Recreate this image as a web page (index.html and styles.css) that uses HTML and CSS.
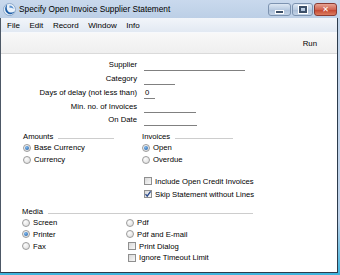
FILE: index.html
```html
<!DOCTYPE html>
<html lang="en">
<head>
  <meta charset="UTF-8">
  <title>Specify Open Invoice Supplier Statement</title>
  <link rel="stylesheet" href="styles.css">
</head>
<body>
  <div class="window">
    <div class="titlebar">
      <svg class="app-icon" width="13" height="13" viewBox="0 0 13 13">
        <circle cx="6.5" cy="6.5" r="6" fill="#e9f1fa" stroke="#7f9dc2" stroke-width="0.8"/>
        <path d="M4.2 1.8 C1.2 3.6 1.4 9.4 5.6 10.9 C8.4 11.8 10.8 10.3 11.6 8.2 C9.6 10 6.4 10 4.8 8 C3.4 6.2 3.6 3.6 4.2 1.8 Z" fill="#1f5fa8"/>
        <path d="M6.4 2.6 C8.6 2.4 10.4 4 10.6 6 C9.4 4.8 7.8 4.4 6.6 4.9 Z" fill="#5d93cf"/>
      </svg>
      <span class="title">Specify Open Invoice Supplier Statement</span>
      <div class="caption-buttons">
        <span class="cap-btn min"><i></i></span>
        <span class="cap-btn max"><i></i></span>
        <span class="cap-btn close">&#x2715;</span>
      </div>
    </div>

    <div class="client">
      <nav class="menubar">
        <span>File</span>
        <span>Edit</span>
        <span>Record</span>
        <span>Window</span>
        <span>Info</span>
      </nav>
      <div class="toolbar">
        <span>Run</span>
      </div>

      <div class="content">
        <div class="fields">
          <label>Supplier</label>
          <span class="field w-supplier"></span>
          <label>Category</label>
          <span class="field w-category"></span>
          <label>Days of delay (not less than)</label>
          <span class="field w-days">0</span>
          <label>Min. no. of Invoices</label>
          <span class="field w-min"></span>
          <label>On Date</label>
          <span class="field w-date"></span>
        </div>

        <div class="groups">
          <div class="group">
            <div class="group-head">Amounts</div>
            <div class="option"><span class="radio checked"></span>Base Currency</div>
            <div class="option"><span class="radio"></span>Currency</div>
          </div>
          <div class="group">
            <div class="group-head">Invoices</div>
            <div class="option"><span class="radio checked"></span>Open</div>
            <div class="option"><span class="radio"></span>Overdue</div>
            <div class="checks">
              <div class="option check-row"><span class="check"></span>Include Open Credit Invoices</div>
              <div class="option check-row"><span class="check checked"><svg width="8" height="8" viewBox="0 0 8 8"><path d="M1.5 4.2 L3.2 6.2 L6.6 1.4" fill="none" stroke="#27478a" stroke-width="1.3"/></svg></span>Skip Statement without Lines</div>
            </div>
          </div>
        </div>

        <div class="media">
          <div class="group-head">Media</div>
          <div class="media-grid">
            <div class="option"><span class="radio"></span>Screen</div>
            <div class="option"><span class="radio"></span>Pdf</div>
            <div class="option"><span class="radio checked"></span>Printer</div>
            <div class="option"><span class="radio"></span>Pdf and E-mail</div>
            <div class="option"><span class="radio"></span>Fax</div>
            <div class="option check-row"><span class="check"></span>Print Dialog</div>
            <div></div>
            <div class="option check-row"><span class="check"></span>Ignore Timeout Limit</div>
          </div>
        </div>
      </div>
    </div>
  </div>
</body>
</html>
```

FILE: styles.css
```css
/* Window frame */
body {
  margin: 0;
  padding: 0;
  font-family: "Liberation Sans", Arial, sans-serif;
  color: #000;
}
.window {
  width: 340px;
  height: 275px;
  box-sizing: border-box;
  padding: 0 2px 2px 0;
  background: linear-gradient(to bottom, #c4d5ea 0, #c0d3ea 80%, #3bb3dc 100%);
  display: flex;
  flex-direction: column;
}
.titlebar {
  height: 18px;
  display: flex;
  align-items: center;
  padding-left: 3px;
  background: linear-gradient(to bottom, #c9d9ed, #bccfe6);
}
.app-icon {
  flex: none;
}
.title {
  margin-left: 3px;
  font-size: 8.3px;
  white-space: nowrap;
}
.caption-buttons {
  margin-left: auto;
  margin-right: 1px;
  align-self: flex-start;
  margin-top: 3px;
  display: flex;
  gap: 1px;
}
.cap-btn {
  height: 13px;
  box-sizing: border-box;
  border: 1px solid #7d93b0;
  border-radius: 3px;
  background: linear-gradient(to bottom, #dde7f3, #b9cbe1 50%, #a9bdd7 51%, #c3d3e6);
  display: flex;
  align-items: center;
  justify-content: center;
}
.cap-btn.min {
  width: 23px;
}
.cap-btn.min i {
  width: 7px;
  height: 2px;
  margin-top: 4px;
  background: #3c4f68;
  border: 1px solid #fff;
}
.cap-btn.max {
  width: 21px;
}
.cap-btn.max i {
  width: 4px;
  height: 3px;
  border: 2px solid #3c4f68;
  outline: 1px solid #fff;
}
.cap-btn.close {
  width: 23px;
  border-color: #8a3b32;
  background: linear-gradient(to bottom, #e7a393, #d06450 50%, #c2412c 51%, #db7d60);
  color: #fff;
  font-size: 8px;
  font-weight: bold;
  font-family: "DejaVu Sans", sans-serif;
}

/* Client area */
.client {
  flex: 1;
  display: flex;
  flex-direction: column;
  background: #fff;
  border-left: 1px solid #4d5866;
  border-right: 1px solid #2c3b4c;
  border-bottom: 1px solid #2c3b4c;
}
.menubar {
  height: 14px;
  display: flex;
  align-items: center;
  gap: 9.6px;
  padding-left: 6px;
  font-size: 8px;
  background: linear-gradient(to bottom, #f2f5fa, #e2e9f3);
  border-bottom: 1px solid #f7f9fc;
}
.toolbar {
  height: 19px;
  display: flex;
  align-items: center;
  justify-content: flex-end;
  padding: 1px 20px 0 0;
  font-size: 7.8px;
  background: linear-gradient(to bottom, #f8f8f8, #efefef);
  border-bottom: 1px solid #dadada;
}

/* Form */
.content {
  font-size: 7.7px;
  padding-top: 4px;
}
.fields {
  display: grid;
  grid-template-columns: 136px auto;
  grid-auto-rows: 13.75px;
  column-gap: 7px;
  align-items: center;
}
.fields label {
  text-align: right;
  white-space: nowrap;
}
.field {
  height: 10px;
  box-sizing: border-box;
  margin-top: 3px;
  border-bottom: 1px solid #808080;
  line-height: 8px;
  padding-left: 1px;
}
.w-supplier { width: 101px; }
.w-category { width: 31px; }
.w-days { width: 11px; }
.w-min { width: 52px; }
.w-date { width: 53px; }

.groups {
  display: grid;
  grid-template-columns: 91px 91px;
  column-gap: 28px;
  margin-top: 4px;
  padding-left: 22px;
}
.group-head {
  height: 11px;
  display: flex;
  align-items: center;
  white-space: nowrap;
}
.group-head::after {
  content: "";
  flex: 1;
  margin: 4px 0 0 5px;
  border-top: 1px solid #cdcdcd;
}
.option {
  height: 12px;
  display: flex;
  align-items: center;
  white-space: nowrap;
}
.checks {
  margin-top: 9px;
}
.checks .option {
  height: 13px;
}
.check-row {
  padding-left: 2px;
}
.radio {
  flex: none;
  width: 8px;
  height: 8px;
  box-sizing: border-box;
  margin-right: 3px;
  border-radius: 50%;
  border: 1px solid #9c9c9c;
  background: radial-gradient(circle at 35% 30%, #fdfdfd, #d9d9d9);
  display: flex;
  align-items: center;
  justify-content: center;
}
.radio.checked::after {
  content: "";
  width: 4px;
  height: 4px;
  border-radius: 50%;
  background: radial-gradient(circle at 40% 35%, #7fb8ee, #1b5aa0);
}
.check {
  flex: none;
  width: 8px;
  height: 8px;
  box-sizing: border-box;
  margin-right: 3px;
  border: 1px solid #8f8f8f;
  background: linear-gradient(135deg, #d8d8d8, #f8f8f8);
  display: flex;
}
.check svg {
  margin: -1px;
}

.media {
  margin-top: 5px;
  padding-left: 21px;
  width: 231px;
}
.media-grid {
  display: grid;
  grid-template-columns: 104px auto;
  grid-auto-rows: 11.75px;
}
.media-grid .option {
  height: auto;
}
```
